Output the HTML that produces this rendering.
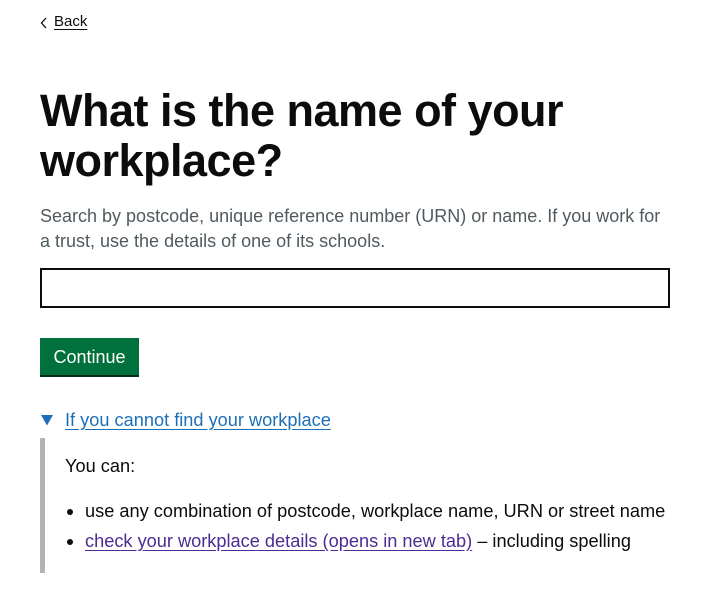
<!DOCTYPE html>
<html><head><meta charset="utf-8"><style>
body{margin:0;width:712px;height:608px;background:#fff;font-family:"Liberation Sans",sans-serif;color:#0b0c0c;position:relative;overflow:hidden}
.a{position:absolute;white-space:nowrap}
h1{position:absolute;left:40px;top:86px;margin:0;font-size:45px;line-height:50px;font-weight:bold;letter-spacing:-0.5px}
.hint{left:40px;top:204px;font-size:18px;line-height:25px;color:#505a5f;white-space:normal;width:632px}
.inp{position:absolute;left:40px;top:268px;width:626px;height:36px;border:2px solid #0b0c0c}
.btn{position:absolute;left:40px;top:338px;width:99px;height:37px;background:#00703c;box-shadow:0 2px 0 #002d18;color:#fff;font-size:18px;line-height:38px;text-align:center}
.sum{left:65px;top:410px;font-size:18.2px;color:#1d70b8;text-decoration:underline;text-underline-offset:3px}
.bar{position:absolute;left:40px;top:438px;width:5px;height:135px;background:#b1b4b6}
.t{font-size:18.2px}
.dot{position:absolute;width:6px;height:6px;border-radius:50%;background:#0b0c0c}
</style></head><body>
<svg class="a" style="left:40px;top:17px" width="8" height="12" viewBox="0 0 8 12"><path d="M6 1 L1.5 6 L6 11" fill="none" stroke="#0b0c0c" stroke-width="1.3"/></svg>
<div class="a t" style="left:54px;top:13px;font-size:15px;text-decoration:underline;text-underline-offset:3px">Back</div>
<h1>What is the name of your<br>workplace?</h1>
<div class="a hint">Search by postcode, unique reference number (URN) or name. If you work for a trust, use the details of one of its schools.</div>
<div class="inp"></div>
<div class="btn">Continue</div>
<svg class="a" style="left:41px;top:415px" width="12" height="11" viewBox="0 0 12 11"><path d="M0 0 H12 L6 10.5 Z" fill="#1d70b8"/></svg>
<div class="a sum">If you cannot find your workplace</div>
<div class="bar"></div>
<div class="a t" style="left:65px;top:456px">You can:</div>
<div class="dot" style="left:67px;top:509px"></div>
<div class="a t" style="left:85px;top:501px">use any combination of postcode, workplace name, URN or street name</div>
<div class="dot" style="left:67px;top:539px"></div>
<div class="a t" style="left:85px;top:531px"><span style="color:#4c2c92;text-decoration:underline;text-underline-offset:3px">check your workplace details (opens in new tab)</span> – including spelling</div>
</body></html>
